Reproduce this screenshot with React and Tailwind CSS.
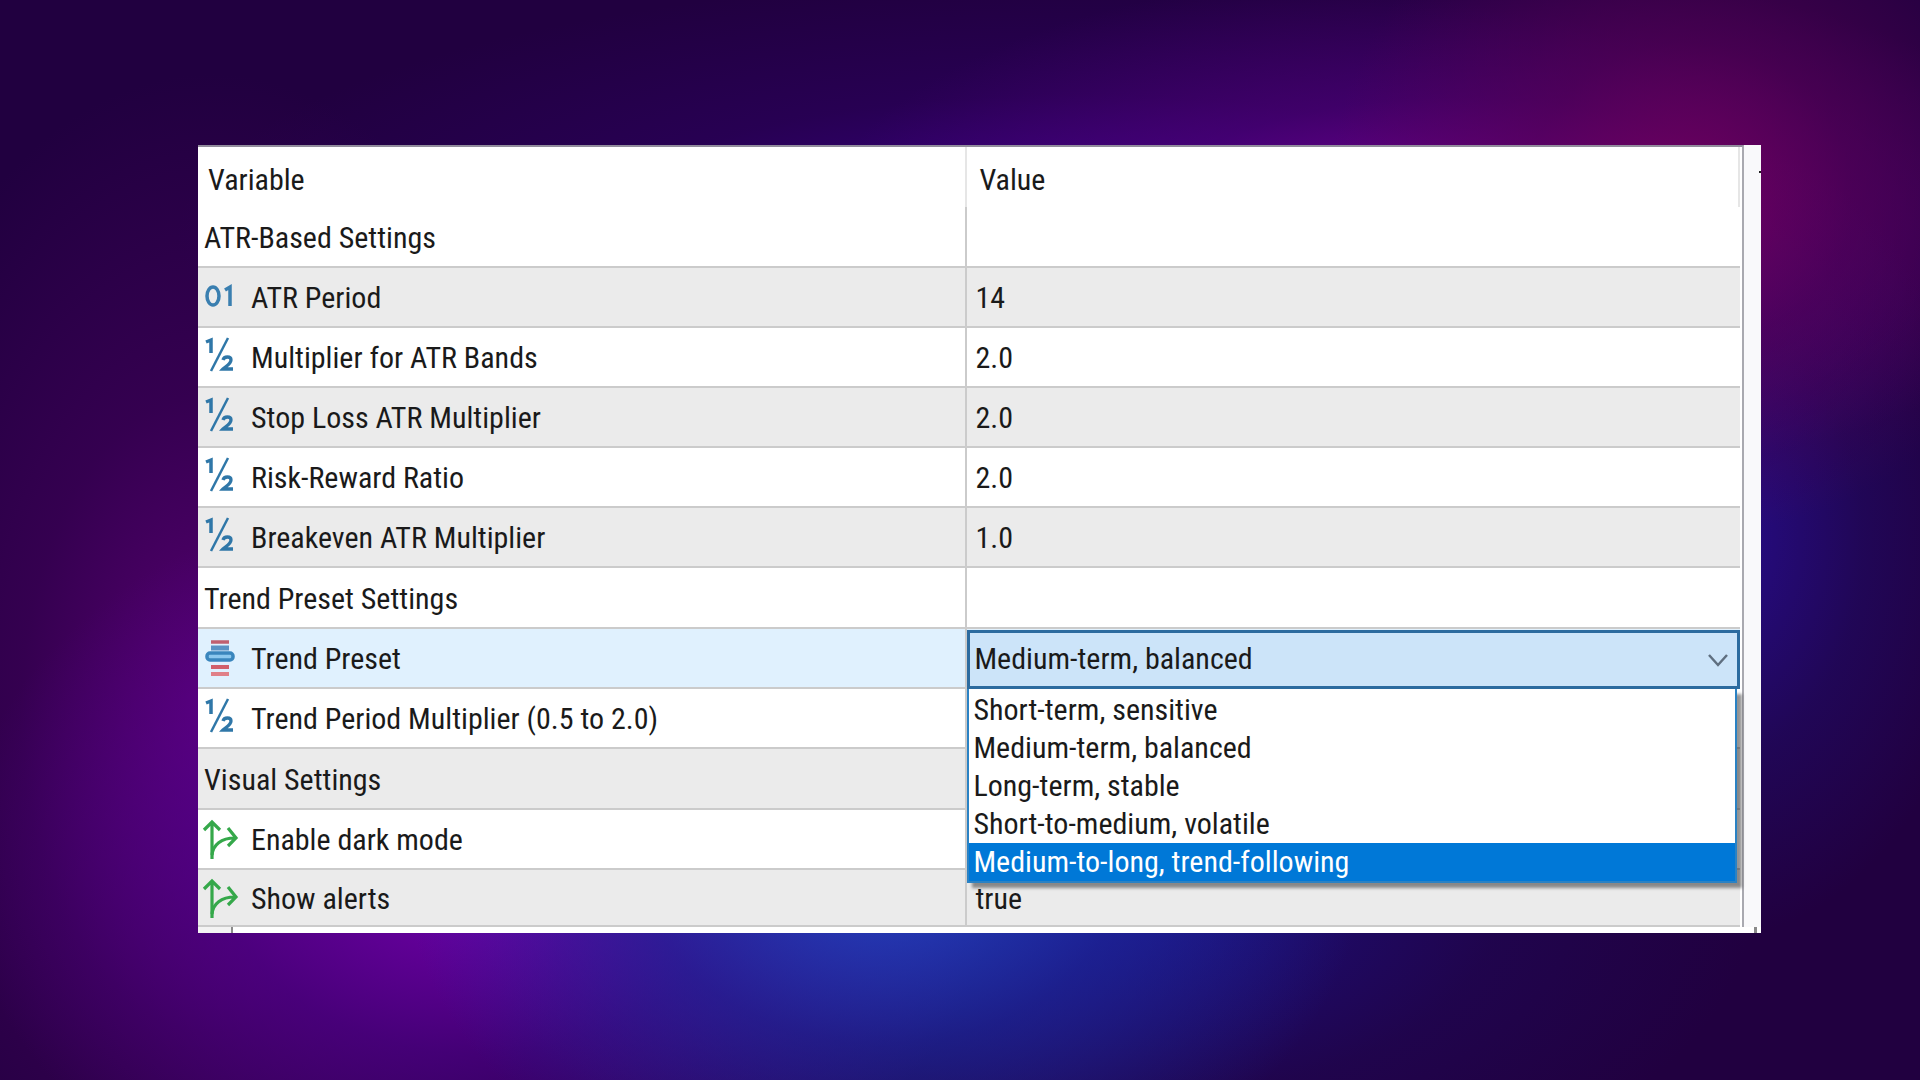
import React, { useState } from 'react';

const presets = [
  'Short-term, sensitive',
  'Medium-term, balanced',
  'Long-term, stable',
  'Short-to-medium, volatile',
  'Medium-to-long, trend-following',
];

const rows = [
  { type: 'section', label: 'ATR-Based Settings' },
  { type: 'int',     label: 'ATR Period', value: '14' },
  { type: 'double',  label: 'Multiplier for ATR Bands', value: '2.0' },
  { type: 'double',  label: 'Stop Loss ATR Multiplier', value: '2.0' },
  { type: 'double',  label: 'Risk-Reward Ratio', value: '2.0' },
  { type: 'double',  label: 'Breakeven ATR Multiplier', value: '1.0' },
  { type: 'section', label: 'Trend Preset Settings' },
  { type: 'enum',    label: 'Trend Preset' },
  { type: 'double',  label: 'Trend Period Multiplier (0.5 to 2.0)', value: '' },
  { type: 'section', label: 'Visual Settings' },
  { type: 'bool',    label: 'Enable dark mode', value: '' },
  { type: 'bool',    label: 'Show alerts', value: 'true' },
];

function IntIcon() {
  return (
    <svg viewBox="0 0 32 40" className="w-8 h-10 shrink-0" fill="none" stroke="#3a7fb0" strokeWidth="3.5" aria-hidden="true">
      <ellipse cx="9" cy="18" rx="6" ry="9" />
      <path d="M21 12l5-3v19" />
    </svg>
  );
}

function DoubleIcon() {
  return (
    <svg viewBox="0 0 32 40" className="w-8 h-10 shrink-0 overflow-visible" fill="none" stroke="#2f77a8" aria-hidden="true">
      <path d="M2 4l5-2v13" strokeWidth="3.5" />
      <path d="M24 0L7 33" strokeWidth="2.5" />
      <path d="M19 22c1-4 8-4 8 0 0 4-5 6-8 9h10" strokeWidth="3.3" />
    </svg>
  );
}

function EnumIcon() {
  return (
    <svg viewBox="0 0 32 40" className="w-8 h-10 shrink-0" fill="none" aria-hidden="true">
      <path d="M7 3h18" stroke="#c06070" strokeWidth="3.5" />
      <path d="M7 9h18" stroke="#5b93c4" strokeWidth="5" />
      <rect x="3" y="14" width="26" height="7" rx="3" fill="#8cc8ee" stroke="#3a86bd" strokeWidth="3.5" />
      <path d="M7 28h18" stroke="#d0606a" strokeWidth="4" />
      <path d="M7 35h18" stroke="#e08088" strokeWidth="4" />
    </svg>
  );
}

function BoolIcon() {
  return (
    <svg viewBox="0 0 32 40" className="w-8 h-10 shrink-0 overflow-visible" fill="none" stroke="#35a84a" strokeWidth="3.2" aria-hidden="true">
      <path d="M8 39V3M0 10l8-8 8 8" />
      <path d="M8 35C9 25 17 18 31 18M24 8l8 10-8 8" />
    </svg>
  );
}

const icons = { int: IntIcon, double: DoubleIcon, enum: EnumIcon, bool: BoolIcon };

function PresetSelect() {
  const [open, setOpen]       = useState(true);
  const [value, setValue]     = useState(presets[1]);
  const [hovered, setHovered] = useState(presets[4]);

  const toggle = (e) => {
    e.preventDefault();
    setOpen(v => !v);
  };

  return (
    <div className="relative">
      <select
        id="trend-preset"
        value={value}
        onMouseDown={toggle}
        onChange={e => setValue(e.target.value)}
        className="block w-full h-[59px] appearance-none border-3 border-[#2c6b9f] bg-[#cce4f9] pl-1 pr-12 outline-none"
      >
        {presets.map(p => <option key={p}>{p}</option>)}
      </select>
      <svg viewBox="0 0 20 14" className="absolute right-3 top-6 w-5 h-[14px] pointer-events-none" fill="none" stroke="#5f6f80" strokeWidth="2.5" aria-hidden="true">
        <path d="M1 1l9 10 9-10" />
      </svg>

      {/* Option list */}
      {open && (
        <ul role="listbox" aria-label="Trend Preset" className="absolute z-10 left-0 right-[3px] top-full border-2 border-t-0 border-[#2a82c4] bg-white pt-[2px] shadow-[5px_5px_3px_rgba(0,0,0,0.42)]">
          {presets.map(p => (
            <li
              key={p}
              role="option"
              aria-selected={p === value}
              onMouseEnter={() => setHovered(p)}
              onClick={() => { setValue(p); setOpen(false); }}
              className={`h-[38px] pl-1 leading-[38px] ${p === hovered ? 'bg-[#0078d7] text-white' : 'text-[#1a1a1a]'}`}
            >
              {p}
            </li>
          ))}
        </ul>
      )}
    </div>
  );
}

function SettingRow({ row, index }) {
  const Icon = icons[row.type];
  const isEnum = row.type === 'enum';
  const bg = isEnum ? 'bg-[#e0f1fe]' : index % 2 ? 'bg-[#ebebeb]' : 'bg-white';
  const height = row.type === 'section' ? 'h-[61px]' : index === rows.length - 1 ? 'h-[57px]' : 'h-[60px]';

  return (
    <tr className={bg}>
      <th scope="row" className={`${height} p-0 pt-[2px] pl-[6px] font-normal text-left border-b-2 border-r-2 border-[#cbcbcb]`}>
        <div className="flex items-center gap-[15px]">
          {Icon && <Icon />}
          {isEnum ? <label htmlFor="trend-preset">{row.label}</label> : <span>{row.label}</span>}
        </div>
      </th>
      {isEnum
        ? <td className="p-0"><PresetSelect /></td>
        : <td className="p-0 pt-[2px] pl-2 border-b-2 border-[#cbcbcb]">{row.value}</td>}
    </tr>
  );
}

export default function App() {
  return (
    <div className="min-h-screen pt-[145px] pb-[147px] pl-[198px] pr-[159px] bg-[#210040] bg-[radial-gradient(ellipse_360px_340px_at_88%_18%,#78005ccc,#5c005488_45%,transparent),radial-gradient(ellipse_640px_260px_at_76%_21%,#8c00a0cc,#64008c66_50%,transparent),radial-gradient(ellipse_900px_260px_at_56%_22%,#4400a8bb,#34007855_55%,transparent),radial-gradient(ellipse_280px_400px_at_89%_50%,#28109ecc,#20107866_55%,transparent),radial-gradient(ellipse_480px_360px_at_46%_80%,#2448c8ee,#1c2ca499_50%,transparent),radial-gradient(ellipse_520px_380px_at_25%_80%,#7c00b8ee,#56009699_50%,transparent),radial-gradient(ellipse_380px_640px_at_11%_66%,#60007add,#46005e88_50%,transparent),radial-gradient(ellipse_640px_320px_at_58%_84%,#1a18a0aa,#1c107044_60%,transparent)] font-['Roboto_Condensed','Liberation_Sans',sans-serif] text-[30px] leading-[38px] text-[#1a1a1a]">
      <main className="flex flex-wrap bg-white">
        <div className="flex-1 border-t-2 border-r-2 border-t-[#918c9c] border-r-[#a9a9b0] pr-[2px]">
          <table className="w-full table-fixed border-separate border-spacing-0">
            <thead>
              <tr>
                <th scope="col" className="w-[49.9%] h-[60px] p-0 pt-[6px] pl-[10px] font-normal text-left border-r-2 border-[#e6e6e6]">Variable</th>
                <th scope="col" className="p-0 pt-[6px] pl-3 font-normal text-left border-r-2 border-[#e6e6e6]">Value</th>
              </tr>
            </thead>
            <tbody>
              {rows.map((row, i) => <SettingRow key={row.label} row={row} index={i} />)}
            </tbody>
          </table>
        </div>

        {/* Window edge */}
        <div className="w-[17px] bg-[#f9f9fb] pt-[26px]">
          <div className="ml-auto w-[2px] h-[2px] bg-[#202020]" />
        </div>
        <div className="flex w-full h-[6px] justify-between pr-1">
          <div className="w-[35px] bg-[#f3f3f3] border-r-2 border-[#8a8a8a]" />
          <div className="w-[3px] bg-[#8a8a8a]" />
        </div>
      </main>
    </div>
  );
}
